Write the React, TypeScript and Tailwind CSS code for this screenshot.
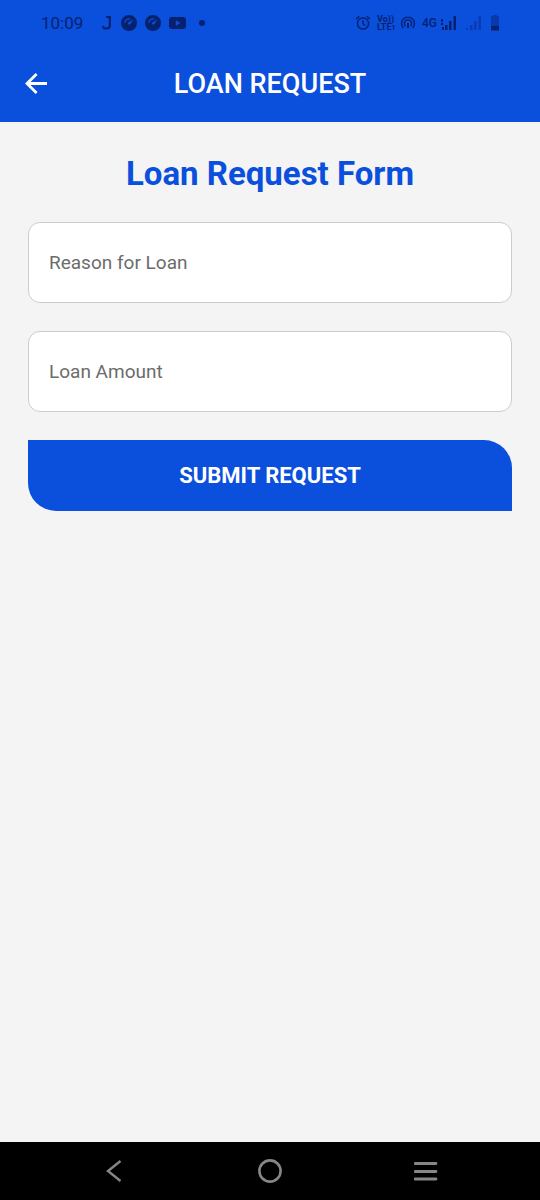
import React from "react";

function SpeedIcon() {
  return (
    <svg viewBox="0 0 16 16" className="size-4" aria-hidden="true">
      <circle cx="8" cy="8" r="8" fill="currentColor" />
      <path d="M3.800 8A4.400 4.400 0 0 1 9.500 4" fill="none" stroke="#0b4fdd" strokeWidth="1.200" />
      <path d="M12.600 4.400 9.200 9.200a1.300 1.300 0 1 1-1.900-1.800Z" fill="#0b4fdd" />
    </svg>
  );
}

function SignalBars({ roaming }: { roaming?: boolean }) {
  return (
    <svg viewBox="0 0 17 16" className="h-4 w-[17px]" fill="currentColor" aria-hidden="true">
      {roaming ? (
        <path d="M1 4h2v3H1zM1 8h2v2H1zM2 12h2v3H2z" />
      ) : (
        <path d="M1 13h2v2H1z" />
      )}
      <path d="M5 10h2.500v5H5zM9 6h2.500v9H9zM13.500 1h2.500v14h-2.500z" />
    </svg>
  );
}

function StatusBar() {
  return (
    <div className="flex h-[46px] items-center justify-between pr-10 pl-[41px] text-[#06226e]">
      <div className="flex items-center gap-2">
        <span className="w-[52px] text-[17px] leading-5">10:09</span>
        <svg viewBox="0 0 12 16" className="h-4 w-3" fill="none" stroke="currentColor" strokeWidth="2.200" aria-hidden="true">
          <path d="M5 2h3.800v8.500a3 3 0 0 1-3 3H4.500a2.200 2.200 0 0 1-2.200-2.500" />
        </svg>
        <SpeedIcon />
        <SpeedIcon />
        <svg viewBox="0 0 17 16" className="h-4 w-[17px]" aria-hidden="true">
          <rect x="0" y="2" width="17" height="12" rx="3" fill="currentColor" />
          <path d="M6.800 5.200v5.600L11.400 8z" fill="#0b4fdd" />
        </svg>
        <svg viewBox="0 0 16 16" className="size-4" fill="currentColor" aria-hidden="true">
          <circle cx="8" cy="8" r="3" />
        </svg>
      </div>
      <div className="flex items-center">
        <svg viewBox="0 0 16 16" className="mr-1.5 size-4" fill="none" stroke="currentColor" strokeWidth="1.500" aria-hidden="true">
          <circle cx="8" cy="8.500" r="5.600" />
          <path d="M8 5.200v3.500l2.200 1.800M1 4l3.300-2.800M15 4l-3.300-2.800" />
        </svg>
        <div className="mr-1 flex w-[19px] flex-col text-[9px] leading-[8px] font-bold whitespace-nowrap">
          <span>Vo))</span>
          <span>LTE<span className="text-[7px]">1</span></span>
        </div>
        <svg viewBox="0 0 16 16" className="mr-1.5 size-4" fill="none" stroke="currentColor" strokeWidth="1.400" aria-hidden="true">
          <path d="M3.400 13.200a6.500 6.500 0 1 1 9.200 0M5.400 11.200a3.700 3.700 0 1 1 5.200 0" />
          <path d="M8 8v5" strokeWidth="2" />
        </svg>
        <span className="w-[18px] text-[12px] leading-4 font-medium">4G</span>
        <SignalBars roaming />
        <div className="ml-2 opacity-40">
          <SignalBars />
        </div>
        <svg viewBox="0 0 10 18" className="ml-2 h-[18px] w-[10px]" fill="currentColor" aria-hidden="true">
          <path d="M3 1h4v1h2v10H1V2h2z" opacity="0.450" />
          <path d="M1 12h8v4.500H1z" />
        </svg>
      </div>
    </div>
  );
}

function Field({ id, label, inputMode }: { id: string; label: string; inputMode?: "decimal" }) {
  return (
    <input
      id={id}
      type="text"
      inputMode={inputMode}
      aria-label={label}
      placeholder={label}
      className="h-[81px] w-full rounded-xl border border-[#cccccc] bg-white px-5 text-[19px] text-[#333333] outline-none placeholder:text-[#6c6c6c] placeholder:opacity-100"
    />
  );
}

export default function App() {
  return (
    <div className="flex min-h-screen flex-col bg-[#f4f4f4] font-['Roboto',sans-serif]">
      <header className="bg-[#0b4fdd] text-white">
        <StatusBar />
        <div className="grid h-[76px] grid-cols-[48px_1fr_48px] items-center px-3">
          <button type="button" aria-label="Back" className="flex size-12 items-center justify-center">
            <svg viewBox="0 0 24 24" className="size-6" fill="none" stroke="currentColor" strokeWidth="2.800" aria-hidden="true">
              <path d="M23 11.500H3M12.600 2 3 11.500l9.600 9.500" />
            </svg>
          </button>
          <h1 className="text-center text-[27px] leading-[34px] font-medium">LOAN REQUEST</h1>
        </div>
      </header>

      <main className="flex-1 px-7 pt-8">
        <h2 className="text-center text-[33px] leading-10 font-bold text-[#0b4fdd]">Loan Request Form</h2>
        <form className="mt-7 flex flex-col gap-7" onSubmit={(e: React.FormEvent) => e.preventDefault()}>
          <Field id="reason" label="Reason for Loan" />
          <Field id="amount" label="Loan Amount" inputMode="decimal" />
          <button
            type="submit"
            className="h-[71px] w-full rounded-tr-[28px] rounded-bl-[28px] bg-[#0b4fdd] text-[22px] font-bold text-white"
          >
            SUBMIT REQUEST
          </button>
        </form>
      </main>

      <nav className="flex h-[58px] items-center justify-around bg-black px-9 text-[#868686]">
        <button type="button" aria-label="Go back" className="flex size-12 items-center justify-center">
          <svg viewBox="0 0 24 24" className="size-6" fill="none" stroke="currentColor" strokeWidth="2.400" aria-hidden="true">
            <path d="M18.500 2 6 12l12.500 10" />
          </svg>
        </button>
        <button type="button" aria-label="Home" className="flex size-12 items-center justify-center">
          <svg viewBox="0 0 24 24" className="size-6" fill="none" stroke="currentColor" strokeWidth="2.600" aria-hidden="true">
            <circle cx="12" cy="12" r="10.600" />
          </svg>
        </button>
        <button type="button" aria-label="Recent apps" className="flex size-12 items-center justify-center">
          <svg viewBox="0 0 24 24" className="size-6" fill="none" stroke="currentColor" strokeWidth="2.800" strokeLinecap="round" aria-hidden="true">
            <path d="M1 4.500h21M1 12.500h21M1 20h21" />
          </svg>
        </button>
      </nav>
    </div>
  );
}
